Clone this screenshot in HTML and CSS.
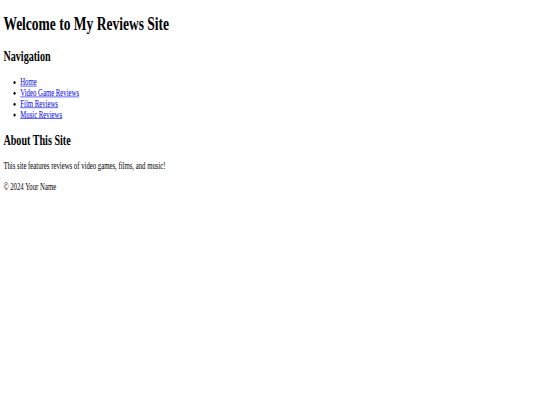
FILE: index.html
```html
<!DOCTYPE html>
<html lang="en">
<head>
<meta charset="utf-8">
<title>My Reviews Site</title>
<link rel="stylesheet" href="styles.css">
</head>
<body>
<div class="page">
  <header class="site-header">
    <h1 class="site-title">Welcome to My Reviews Site</h1>
  </header>
  <nav class="site-nav">
    <h2 class="section-title">Navigation</h2>
    <ul class="nav-list">
      <li><a class="nav-link" href="#">Home</a></li>
      <li><a class="nav-link" href="#">Video Game Reviews</a></li>
      <li><a class="nav-link" href="#">Film Reviews</a></li>
      <li><a class="nav-link" href="#">Music Reviews</a></li>
    </ul>
  </nav>
  <main class="site-main">
    <section class="about">
      <h2 class="section-title">About This Site</h2>
      <p class="about-text">This site features reviews of video games, films, and music!</p>
    </section>
  </main>
  <footer class="site-footer">
    <p class="footer-text">&copy; 2024 Your Name</p>
  </footer>
</div>
</body>
</html>
```

FILE: styles.css
```css
html, body {
  margin: 0;
  padding: 0;
  background: #ffffff;
  overflow: hidden;
}

.page {
  width: 524px;
  padding: 0 8px;
  display: flow-root;
  font-family: "Liberation Serif", "Times New Roman", serif;
  font-size: 16px;
  color: #000000;
  white-space: nowrap;
  transform: scale(0.421875, 0.604);
  transform-origin: 0 0;
}

.site-title {
  font-size: 32px;
  font-weight: bold;
  margin: 21.44px 0;
}

.section-title {
  font-size: 24px;
  font-weight: bold;
  margin: 19.92px 0;
}

.nav-list {
  list-style: disc;
  margin: 16px 0;
  padding-left: 40px;
}

.nav-link {
  color: #0000ee;
  text-decoration: underline;
}

.about-text,
.footer-text {
  margin: 16px 0;
}
```
